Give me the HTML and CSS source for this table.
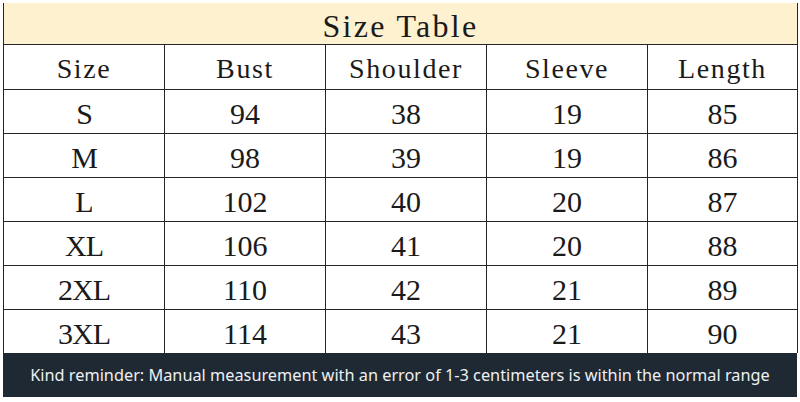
FILE: index.html
```html
<!DOCTYPE html>
<html>
<head>
<meta charset="utf-8">
<link rel="stylesheet" href="styles.css">
</head>
<body>
<div class="sheet">
  <table class="size-table">
    <colgroup>
      <col class="c1"><col class="c2"><col class="c3"><col class="c4"><col class="c5">
    </colgroup>
    <tr class="title-row"><td colspan="5">Size Table</td></tr>
    <tr class="head-row"><td>Size</td><td>Bust</td><td>Shoulder</td><td>Sleeve</td><td>Length</td></tr>
    <tr class="data-row"><td>S</td><td>94</td><td>38</td><td>19</td><td>85</td></tr>
    <tr class="data-row"><td>M</td><td>98</td><td>39</td><td>19</td><td>86</td></tr>
    <tr class="data-row"><td>L</td><td>102</td><td>40</td><td>20</td><td>87</td></tr>
    <tr class="data-row"><td>XL</td><td>106</td><td>41</td><td>20</td><td>88</td></tr>
    <tr class="data-row"><td>2XL</td><td>110</td><td>42</td><td>21</td><td>89</td></tr>
    <tr class="data-row"><td>3XL</td><td>114</td><td>43</td><td>21</td><td>90</td></tr>
  </table>
  <div class="reminder">Kind reminder: Manual measurement with an error of 1-3 centimeters is within the normal range</div>
</div>
</body>
</html>
```
FILE: styles.css
```css
html, body {
  margin: 0;
  padding: 0;
  background: #ffffff;
}
.sheet {
  padding: 3px 3px 0 3px;
  width: 794px;
}
.size-table {
  border-collapse: collapse;
  width: 794px;
  table-layout: fixed;
  font-family: "Liberation Serif", "Times New Roman", serif;
  color: #1a1a1a;
}
.c1, .c2, .c3, .c4 { width: 161px; }
.c5 { width: 150px; }
.size-table td {
  border: 1.5px solid #262626;
  text-align: center;
  padding: 0;
  white-space: nowrap;
}
.title-row td {
  height: 37px;
  padding-top: 4px;
  background: #fdf1d0;
  font-size: 32px;
  letter-spacing: 2.3px;
  border-top: none;
  line-height: 1;
}
.head-row td {
  height: 40px;
  padding-top: 4px;
  font-size: 28px;
  letter-spacing: 1.6px;
  line-height: 1;
}
.data-row td {
  height: 39px;
  padding-top: 4px;
  font-size: 30px;
  line-height: 1;
}
.data-row td:first-child {
  letter-spacing: -1px;
}
.data-row:last-child td {
  border-bottom: none;
}
.reminder {
  height: 44px;
  background: #1f2933;
  color: #eef0f2;
  font-family: "Noto Sans", "Open Sans", sans-serif;
  font-size: 16.3px;
  display: flex;
  align-items: center;
  justify-content: center;
}
```
